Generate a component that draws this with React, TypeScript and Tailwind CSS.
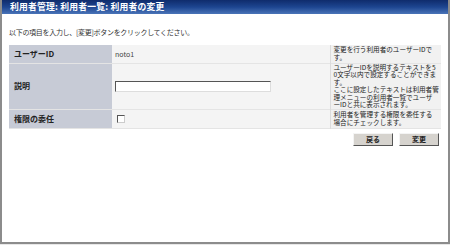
import React from 'react';

// Row data for the edit form
const helpRow1 = ['変更を行う利用者のユーザーIDで', 'す。'];
const helpRow2 = [
  'ユーザーIDを説明するテキストを5',
  '0文字以内で設定することができま',
  'す。',
  'ここに設定したテキストは利用者管',
  '理メニューの利用者一覧でユーザ',
  'ーIDと共に表示されます。',
];
const helpRow3 = ['利用者を管理する権限を委任する', '場合にチェックします。'];

const Help: React.FC<{ lines: string[] }> = ({ lines }) => (
  <td className="bg-[#f1f1f1] border-l border-[#dcdcdc] pl-[3px] py-0 align-middle text-[6.6px] leading-[7.5px] text-[#222] whitespace-nowrap">
    {lines.map((l, i) => (
      <div key={i} className="h-[7.5px]">{l}</div>
    ))}
  </td>
);

const Label: React.FC<{ text: string }> = ({ text }) => (
  <td className="bg-[#c7cbd6] pl-[5px] align-middle text-[8px] font-bold text-[#222]">{text}</td>
);

const Button: React.FC<{ label: string }> = ({ label }) => (
  <button className="w-[40px] h-[13px] bg-[#d6d3ce] border border-t-[#f4f4f4] border-l-[#f4f4f4] border-r-[#555] border-b-[#555] text-[7px] font-bold text-[#222] leading-none flex items-center justify-center">
    {label}
  </button>
);

export default function App() {
  return (
    <div className="w-[450px] h-[245px] bg-[#e8e8e8] font-['Noto_Sans_CJK_JP',sans-serif]">
      <div className="w-[450px] h-[244px] border-2 border-t-0 border-[#8c8c8c] bg-white flex flex-col">
        <div className="h-[14px] bg-gradient-to-b from-[#0f2c6c] via-[#1d4590] to-[#4a74b8] pl-[8px] flex items-center text-white text-[8.8px] font-bold tracking-[0.2px] leading-none">
          利用者管理: 利用者一覧: 利用者の変更
        </div>
        <div className="pl-[7px] pr-[6px]">
          <p className="mt-[14px] text-[7px] leading-[9px] text-[#333] tracking-[-0.3px]">
            以下の項目を入力し、[変更]ボタンをクリックしてください。
          </p>
          <table className="mt-[8px] w-[432px] table-fixed border-collapse">
            <colgroup>
              <col className="w-[103px]" />
              <col className="w-[218px]" />
              <col className="w-[111px]" />
            </colgroup>
            <tbody>
              <tr className="h-[18px] border-b border-[#e4e4e4]">
                <Label text="ユーザーID" />
                <td className="bg-[#f4f4f4] pl-[3px] align-middle text-[7px] text-[#444]">noto1</td>
                <Help lines={helpRow1} />
              </tr>
              <tr className="h-[45px] border-b border-[#e4e4e4]">
                <Label text="説明" />
                <td className="bg-[#f4f4f4] pl-[3px] align-middle">
                  <input
                    type="text"
                    className="block w-[156px] h-[11px] bg-white border border-t-[#555] border-l-[#555] border-r-[#ddd] border-b-[#ddd] outline-none"
                  />
                </td>
                <Help lines={helpRow2} />
              </tr>
              <tr className="h-[19px] border-b border-[#e4e4e4]">
                <Label text="権限の委任" />
                <td className="bg-[#f4f4f4] pl-[5px] align-middle">
                  <span className="block w-[8px] h-[8px] bg-white border border-t-[#555] border-l-[#555] border-r-[#ccc] border-b-[#ccc]" />
                </td>
                <Help lines={helpRow3} />
              </tr>
            </tbody>
          </table>
          <div className="mt-[4px] w-[430px] flex justify-end gap-[6px]">
            <Button label="戻る" />
            <Button label="変更" />
          </div>
        </div>
      </div>
    </div>
  );
}
